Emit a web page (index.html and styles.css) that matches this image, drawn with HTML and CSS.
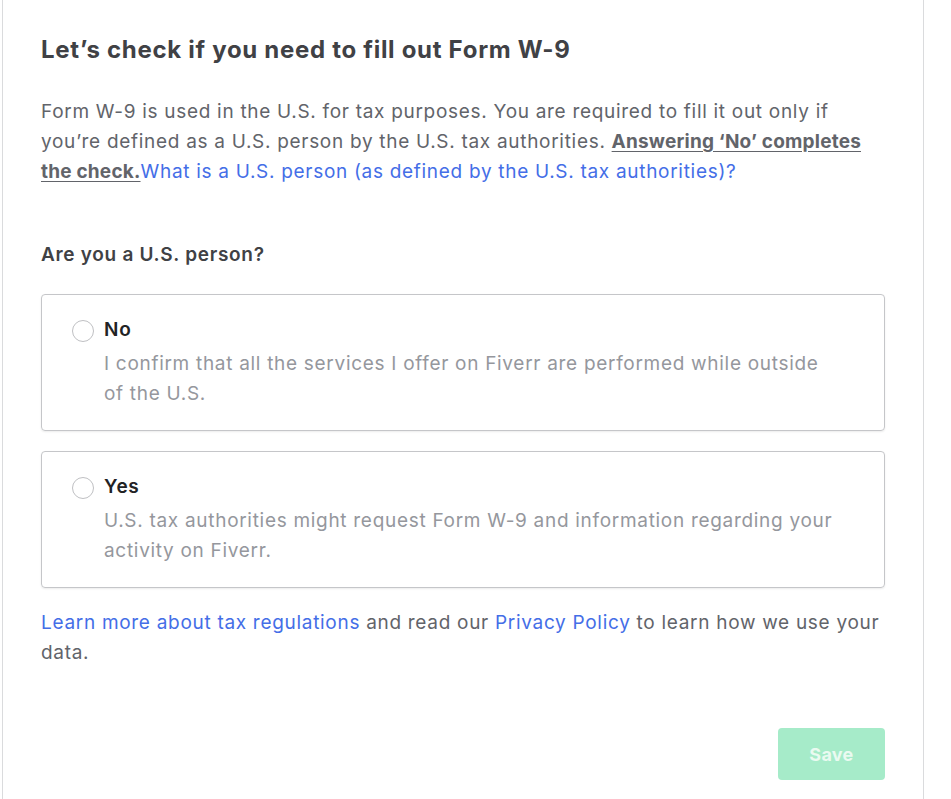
FILE: index.html
```html
<!DOCTYPE html>
<html lang="en">
<head>
<meta charset="utf-8">
<title>Form W-9 check</title>
<link rel="stylesheet" href="styles.css">
</head>
<body>
<div class="panel">
  <h2 class="title">Let’s check if you need to fill out Form W-9</h2>
  <p class="intro">Form W-9 is used in the U.S. for tax purposes. You are required to fill it out only if you’re defined as a U.S. person by the U.S. tax authorities. <strong class="emph">Answering ‘No’ completes the check.</strong><a class="link" href="#">What is a U.S. person (as defined by the U.S. tax authorities)?</a></p>
  <h3 class="question">Are you a U.S. person?</h3>
  <div class="options">
    <label class="option">
      <span class="radio"></span>
      <span class="option-text">
        <span class="option-title">No</span>
        <span class="option-desc">I confirm that all the services I offer on Fiverr are performed while outside of the U.S.</span>
      </span>
    </label>
    <label class="option">
      <span class="radio"></span>
      <span class="option-text">
        <span class="option-title">Yes</span>
        <span class="option-desc">U.S. tax authorities might request Form W-9 and information regarding your activity on Fiverr.</span>
      </span>
    </label>
  </div>
  <p class="footnote"><a class="link" href="#">Learn more about tax regulations</a> and read our <a class="link" href="#">Privacy Policy</a> to learn how we use your data.</p>
  <div class="actions">
    <button class="save" type="button">Save</button>
  </div>
</div>
</body>
</html>
```

FILE: styles.css
```css
html, body {
  margin: 0;
  padding: 0;
  background: #fff;
}
body {
  font-family: Inter, "Noto Sans", Arial, sans-serif;
  color: #62646a;
  letter-spacing: 0.7px;
}
.panel {
  margin-left: 2px;
  width: 922px;
  min-height: 799px;
  box-sizing: border-box;
  border-left: 1px solid #dadbdd;
  border-right: 1px solid #dadbdd;
  padding: 35px 38px 0 38px;
}
.title {
  margin: 0;
  font-size: 24px;
  line-height: 30px;
  font-weight: 700;
  letter-spacing: 0.7px;
  color: #404145;
}
.intro {
  margin: 32px 0 0;
  font-size: 19px;
  line-height: 30px;
}
.emph {
  font-weight: 700;
  color: #62646a;
  letter-spacing: 0.2px;
  text-decoration: underline;
  text-underline-offset: 3px;
}
.link {
  color: #446ee7;
  text-decoration: none;
}
.question {
  margin: 53px 0 0;
  font-size: 19px;
  line-height: 30px;
  font-weight: 600;
  color: #404145;
}
.options {
  margin-top: 24px;
  display: flex;
  flex-direction: column;
  gap: 20px;
}
.option {
  display: flex;
  align-items: flex-start;
  gap: 10px;
  border: 1px solid #c5c6c9;
  border-radius: 4px;
  box-shadow: 0 1px 2px rgba(0, 0, 0, 0.08);
  padding: 20px 50px 21px 30px;
  cursor: pointer;
}
.radio {
  flex: none;
  width: 20px;
  height: 20px;
  margin-top: 5px;
  border: 1px solid #bfc0c3;
  border-radius: 50%;
  box-sizing: content-box;
}
.option-text {
  display: flex;
  flex-direction: column;
}
.option-title {
  font-size: 19px;
  line-height: 30px;
  font-weight: 600;
  color: #222325;
  margin-bottom: 4px;
}
.option-desc {
  font-size: 19px;
  line-height: 30px;
  color: #95979d;
}
.footnote {
  margin: 20px 0 0;
  font-size: 19px;
  line-height: 30px;
}
.actions {
  display: flex;
  justify-content: flex-end;
  margin-top: 60px;
}
.save {
  width: 107px;
  height: 52px;
  border: none;
  border-radius: 4px;
  background: #a6ebc9;
  color: #eafaf1;
  font-family: inherit;
  font-size: 18px;
  font-weight: 700;
  letter-spacing: 0.3px;
}
```
